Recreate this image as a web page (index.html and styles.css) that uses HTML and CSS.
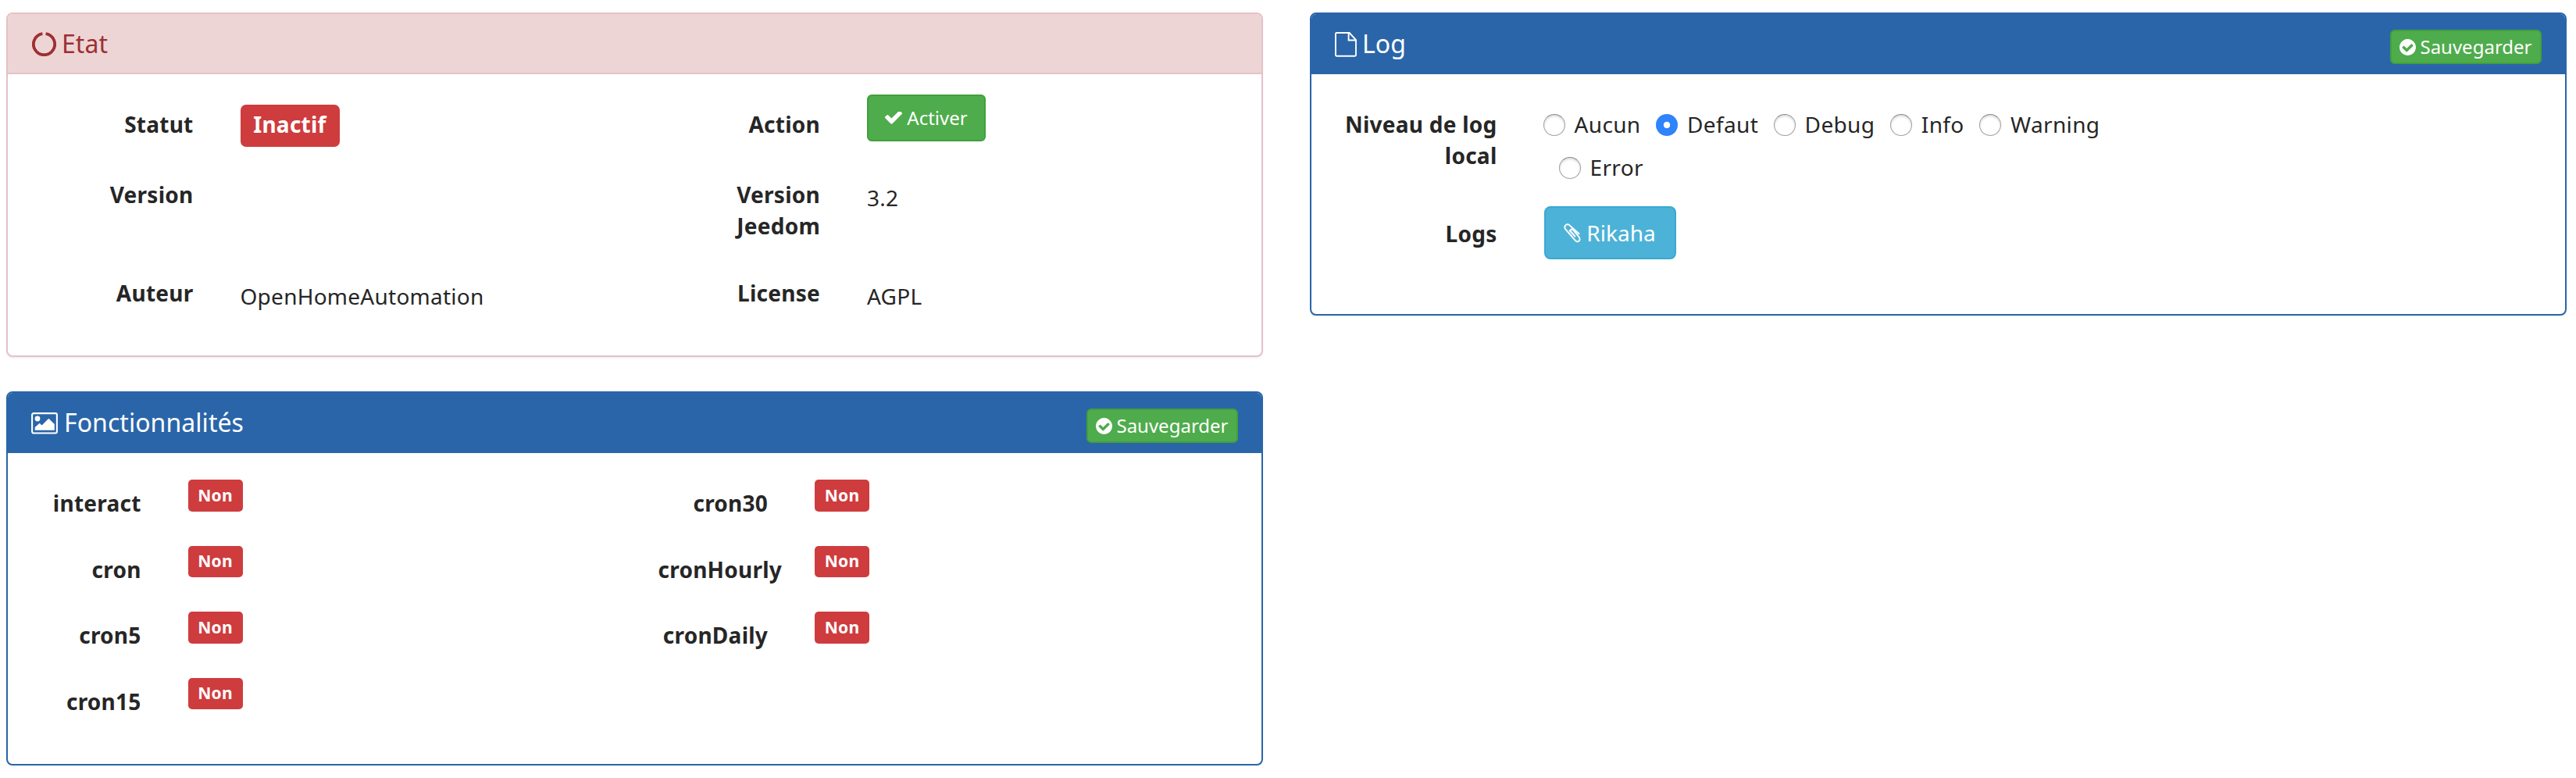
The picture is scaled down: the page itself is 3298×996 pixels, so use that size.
FILE: index.html
```html
<!DOCTYPE html>
<html lang="fr">
<head>
<meta charset="utf-8">
<title>Rikaha</title>
<link rel="stylesheet" href="styles.css">
</head>
<body>
<svg class="defs" width="0" height="0">
  <symbol id="ok" viewBox="121 434 1550 1088"><path d="M1671 566q0 40-28 68l-724 724-136 136q-28 28-68 28t-68-28l-136-136-362-362q-28-28-28-68t28-68l136-136q28-28 68-28t68 28l294 295 656-657q28-28 68-28t68 28l136 136q28 28 28 68z"/></symbol>
  <symbol id="ok-circle" viewBox="128 128 1536 1536"><path d="M1412 734q0-28-18-46l-91-90q-19-19-45-19t-45 19l-408 407-226-226q-19-19-45-19t-45 19l-91 90q-18 18-18 46 0 27 18 45l362 362q19 19 45 19 27 0 46-19l543-543q18-18 18-45zm252 162q0 209-103 385.5t-279.5 279.5-385.5 103-385.5-103-279.5-279.5-103-385.5 103-385.5 279.5-279.5 385.5-103 385.5 103 279.5 279.5 103 385.5z"/></symbol>
</svg>
<main class="page">
  <div class="column">
    <section class="panel panel-danger">
      <header class="panel-heading">
        <h3 class="title"><svg class="icon-notch" viewBox="0 0 31 31"><path d="M13.4 2.2A13.6 13.6 0 1 0 17.6 2.2" fill="none" stroke="currentColor" stroke-width="3.8"/></svg><span>Etat</span></h3>
      </header>
      <div class="panel-body">
        <div class="row state-row">
          <span class="label">Statut</span><div class="value"><span class="badge badge-lg">Inactif</span></div>
          <span class="label">Action</span><div class="value"><button class="btn btn-success btn-sm"><svg class="icon-check"><use href="#ok"/></svg>Activer</button></div>
        </div>
        <div class="row state-row state-row-tall">
          <span class="label">Version</span><div class="value"></div>
          <span class="label">Version Jeedom</span><div class="value"><span class="text">3.2</span></div>
        </div>
        <div class="row state-row state-row-last">
          <span class="label">Auteur</span><div class="value"><span class="text">OpenHomeAutomation</span></div>
          <span class="label">License</span><div class="value"><span class="text">AGPL</span></div>
        </div>
      </div>
    </section>
    <section class="panel panel-primary">
      <header class="panel-heading">
        <h3 class="title"><svg class="icon-picture" viewBox="0 0 34 28"><rect x="1.1" y="1.1" width="31.8" height="25.4" rx="2" fill="none" stroke="currentColor" stroke-width="2.1"/><circle cx="8" cy="8" r="3.4" fill="currentColor"/><path d="M4.7 22.8v-3.7l6-5.3 2.8 2.8 8.8-8.8 7.5 7.3v7.7z" fill="currentColor"/></svg><span>Fonctionnalités</span></h3>
        <button class="btn btn-success btn-xs"><svg class="icon-ok"><use href="#ok-circle"/></svg>Sauvegarder</button>
      </header>
      <div class="panel-body features">
        <div class="feature-column">
          <div class="row feature-row"><span class="label">interact</span><div class="value"><span class="badge">Non</span></div></div>
          <div class="row feature-row"><span class="label">cron</span><div class="value"><span class="badge">Non</span></div></div>
          <div class="row feature-row"><span class="label">cron5</span><div class="value"><span class="badge">Non</span></div></div>
          <div class="row feature-row"><span class="label">cron15</span><div class="value"><span class="badge">Non</span></div></div>
        </div>
        <div class="feature-column">
          <div class="row feature-row"><span class="label">cron30</span><div class="value"><span class="badge">Non</span></div></div>
          <div class="row feature-row"><span class="label">cronHourly</span><div class="value"><span class="badge">Non</span></div></div>
          <div class="row feature-row"><span class="label">cronDaily</span><div class="value"><span class="badge">Non</span></div></div>
        </div>
      </div>
    </section>
  </div>
  <div class="column">
    <section class="panel panel-primary">
      <header class="panel-heading">
        <h3 class="title"><svg class="icon-file" viewBox="0 0 28 32"><path d="M1 2.2q0-1.2 1.2-1.2H18.6L27 10v19.6q0 1.2-1.2 1.2H2.2Q1 30.8 1 29.6zM17.6 1v9.5H27" fill="none" stroke="currentColor" stroke-width="1.9"/></svg><span>Log</span></h3>
        <button class="btn btn-success btn-xs"><svg class="icon-ok"><use href="#ok-circle"/></svg>Sauvegarder</button>
      </header>
      <div class="panel-body">
        <div class="row level-row">
          <span class="label">Niveau de log local</span>
          <div class="value radios">
            <label class="radio"><input type="radio" name="level">Aucun</label>
            <label class="radio"><input type="radio" name="level" checked>Defaut</label>
            <label class="radio"><input type="radio" name="level">Debug</label>
            <label class="radio"><input type="radio" name="level">Info</label>
            <label class="radio"><input type="radio" name="level">Warning</label>
            <label class="radio radio-wrapped"><input type="radio" name="level">Error</label>
          </div>
        </div>
        <div class="row logs-row">
          <span class="label">Logs</span>
          <div class="value"><button class="btn btn-info"><svg class="icon-clip" viewBox="0 0 22 25"><path d="M14.4 16.6L9.4 10.6C7.6 8.2 10.200 6.400 11.800 8.200L18.600 16.200C23 21.300 18.400 26 14.600 21.600L2.600 7.800C-1 3.500 4.400-1.300 8 2.900L19.600 13.200M14.400 16.600L7.600 9.300" fill="none" stroke="currentColor" stroke-width="1.900" stroke-linecap="round"/></svg>Rikaha</button></div>
        </div>
      </div>
    </section>
  </div>
</main>
</body>
</html>
```
FILE: styles.css
```css
* { box-sizing: border-box; }
body { margin: 0; background: #fff; color: #262626; font: 28px/40px "Noto Sans", sans-serif; letter-spacing: .25px; }
.defs { display: block; }
svg { flex: none; fill: currentColor; }

.page { display: grid; grid-template-columns: 1609px 1609px; column-gap: 60px; align-items: start; padding: 16px 0 0 8px; }
.column { display: flex; flex-direction: column; gap: 44px; }

.panel { border: 2px solid; border-radius: 8px; background: #fff; box-shadow: 0 2px 2px rgba(0, 0, 0, .05); overflow: hidden; }
.panel-danger { border-color: #e6c1c7; }
.panel-primary { border-color: #2a65a9; }
.panel-heading { display: flex; justify-content: space-between; align-items: flex-start; height: 77px; padding: 20px 30px 0; }
.panel-danger .panel-heading { background: #eed5d5; color: #9c3033; border-bottom: 2px solid #e6c1c7; }
.panel-primary .panel-heading { background: #2a65a9; color: #fff; }
.title { display: flex; align-items: flex-start; margin: 0; font-size: 32px; font-weight: 400; line-height: 35px; letter-spacing: .05px; }
.panel-body { padding: 30px 0; }

.row { display: flex; align-items: flex-start; }
.label { flex: none; width: 267.5px; padding: 14px 30px 0; text-align: right; font-weight: 700; }
.value { flex: none; width: 535px; padding: 0 30px; display: flex; align-items: flex-start; }
.text { padding-top: 18px; }

.state-row { height: 90px; }
.state-row-tall { height: 126px; }
.state-row-last { height: 84px; }

.features { display: flex; height: 398px; }
.feature-column { width: 802.5px; }
.feature-row { height: 84.6px; }
.feature-row .label { display: flex; justify-content: safe flex-end; width: 200.6px; }
.feature-row .value { width: 600px; }

.badge { width: 70px; height: 40.5px; margin-top: 4px; padding-top: 5.5px; border-radius: 5px; background: #ce3c3e; color: #fff; font-size: 21px; font-weight: 700; line-height: 28px; text-align: center; }
.badge-lg { width: 127px; height: 54px; margin-top: 9px; padding-top: 11px; border-radius: 7px; font-size: 28px; }

.btn { display: flex; align-items: center; justify-content: center; border: 2px solid; border-radius: 6px; color: #fff; font-family: inherit; padding: 0; white-space: nowrap; }
.btn-success { background: #4fac4c; border-color: #41a03b; font-size: 24px; line-height: 36px; }
.btn-info { width: 169px; height: 68px; margin-top: -1px; border-radius: 8px; background: #4db2d7; border-color: #3ba9d1; font-size: 28px; line-height: 40px; }
.btn-sm { width: 152px; height: 60px; margin-top: -4px; }
.btn-xs { width: 194px; height: 44px; }

.icon-notch { width: 31px; height: 31px; margin: 3px 7px 0 1px; }
.icon-picture { width: 34px; height: 28px; margin: 5px 8px 0 0; }
.icon-file { width: 28px; height: 32px; margin: 3px 7px 0 0; }
.icon-ok { width: 21px; height: 21px; margin-right: 5px; }
.icon-check { width: 22px; height: 16px; margin-right: 6px; }
.icon-clip { width: 22px; height: 25px; margin-right: 7px; }

.level-row { height: 140px; }
.logs-row { height: 107px; }
.radios { width: 802.5px; flex-wrap: wrap; padding-top: 14px; column-gap: 20.5px; row-gap: 15px; }
.radio { display: flex; align-items: flex-start; letter-spacing: .35px; }
.radio input { appearance: none; width: 28px; height: 28px; margin: 7px 12px 0 -1px; border: 1.5px solid #a0a0a0; border-top-color: #888; border-radius: 50%; background: #fff; box-shadow: inset 0 2px 3px rgba(0, 0, 0, .14); }
.radio input:checked { border: 0; background: radial-gradient(circle, #fff 0 3.8px, #2f83fb 4.6px); box-shadow: none; }
.radio-wrapped { margin-left: 20px; }
```
